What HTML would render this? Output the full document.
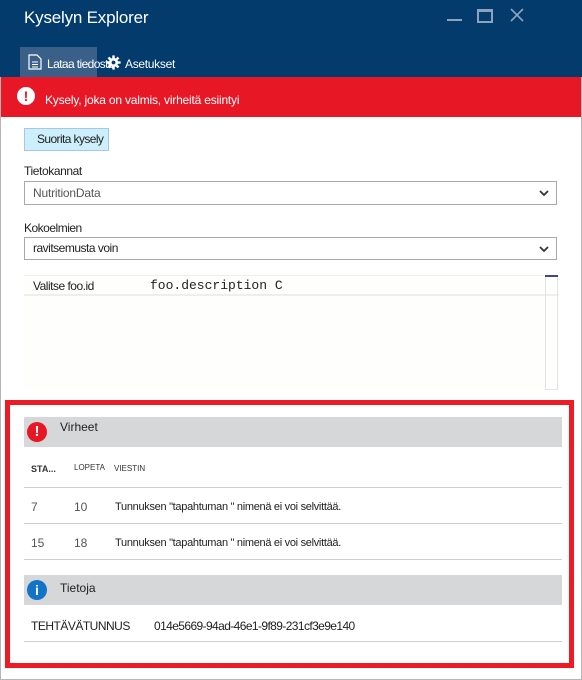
<!DOCTYPE html><html><head><style>
body{margin:0;width:582px;height:680px;position:relative;overflow:hidden;background:#fff;font-family:"Liberation Sans",sans-serif;font-size:12px;color:#222}
.a{position:absolute}
.sel{position:absolute;left:24px;width:533px;border:1px solid #a9a9a9;background:#fff;box-sizing:border-box}
.ln{position:absolute;left:24px;width:538px;height:1px;background:#cfcfcf}
</style></head><body>
<div class="a" style="left:0;top:0;width:582px;height:680px;border:1px solid #b5b5b5;border-top:none;box-sizing:border-box"></div>
<div class="a" style="left:0;top:0;width:582px;height:77px;background:#023b6c"></div>
<div class="a" style="left:24px;top:8px;color:#fff;font-size:17px;letter-spacing:-0.2px">Kyselyn Explorer</div>
<div class="a" style="left:447px;top:19px;width:15px;height:2px;background:#8ea3bb"></div>
<div class="a" style="left:477px;top:9px;width:12px;height:9px;border:2px solid #8ea3bb;border-top-width:3px"></div>
<svg class="a" style="left:510px;top:8px" width="14" height="14"><path d="M1 1l12 12M13 1L1 13" stroke="#8ea3bb" stroke-width="1.6"/></svg>
<div class="a" style="left:20px;top:47px;width:77px;height:30px;background:#3a6089"></div>
<svg class="a" style="left:28px;top:54px" width="14" height="16"><path d="M1 1h8l4 4v10H1z" fill="none" stroke="#fff" stroke-width="1.2"/><path d="M4 8h6M4 10.5h6M4 13h6" stroke="#fff"/></svg>
<div class="a" style="left:47px;top:57px;color:#fff;font-size:12px;letter-spacing:-0.6px">Lataa tiedosto</div>
<svg class="a" style="left:106px;top:55px" width="15" height="15" viewBox="0 0 18 18"><g fill="#fff"><circle cx="9" cy="9" r="5.5"/><rect x="7.5" y="0.5" width="3" height="17"/><rect x="0.5" y="7.5" width="17" height="3"/><rect x="7.5" y="0.5" width="3" height="17" transform="rotate(45 9 9)"/><rect x="7.5" y="0.5" width="3" height="17" transform="rotate(-45 9 9)"/></g><circle cx="9" cy="9" r="2.3" fill="#023b6c"/></svg>
<div class="a" style="left:125px;top:57px;color:#fff;font-size:12px;letter-spacing:-0.3px">Asetukset</div>
<div class="a" style="left:1px;top:77px;width:580px;height:40px;background:#e81725"></div>
<div class="a" style="left:17px;top:87px;width:18px;height:18px;border-radius:50%;background:#fff;color:#e81725;font-weight:bold;text-align:center;line-height:18px;font-size:14px">!</div>
<div class="a" style="left:45px;top:93px;color:#fff;font-size:12px;letter-spacing:-0.2px">Kysely, joka on valmis, virheitä esiintyi</div>
<div class="a" style="left:24px;top:128px;width:85px;height:23px;background:#cdeffc;border:1px solid #a5c8e6;box-sizing:border-box;line-height:21px;padding-left:12px;font-size:12px;letter-spacing:-0.6px">Suorita kysely</div>
<div class="a" style="left:24px;top:164px;letter-spacing:-0.4px">Tietokannat</div>
<div class="sel" style="top:181px;height:24px;line-height:22px;padding-left:8px;color:#555;letter-spacing:-0.2px">NutritionData</div>
<div class="a" style="left:24px;top:221px;letter-spacing:-0.5px">Kokoelmien</div>
<div class="sel" style="top:237px;height:23px;line-height:21px;padding-left:8px;letter-spacing:-0.5px">ravitsemusta voin</div>
<svg class="a" style="left:539px;top:189px" width="10" height="8"><path d="M1 2l4 4 4-4" fill="none" stroke="#333" stroke-width="1.8"/></svg>
<svg class="a" style="left:539px;top:245px" width="10" height="8"><path d="M1 2l4 4 4-4" fill="none" stroke="#333" stroke-width="1.8"/></svg>
<div class="a" style="left:24px;top:275px;width:535px;height:115px;background:#fefefd"></div>
<div class="a" style="left:24px;top:275px;width:535px;height:18px;border-top:1px solid #eee;border-bottom:2px solid #eee"></div>
<div class="a" style="left:33px;top:279px;letter-spacing:-0.5px">Valitse foo.id</div>
<div class="a" style="left:150px;top:278px;font-family:'Liberation Mono',monospace;font-size:13px">foo.description C</div>
<div class="a" style="left:545px;top:275px;width:13px;height:115px;border:1px solid #e3e3e3;box-sizing:border-box"></div>
<div class="a" style="left:545px;top:275px;width:13px;height:2px;background:#3c4a7a"></div>
<div class="a" style="left:5px;top:400px;width:569px;height:268px;border:5px solid #ed1c24;box-sizing:border-box"></div>
<div class="a" style="left:24px;top:417px;width:538px;height:30px;background:#d6d7d9"></div>
<div class="a" style="left:27px;top:422px;width:20px;height:20px;border-radius:50%;background:#e81725;color:#fff;font-weight:bold;text-align:center;line-height:20px;font-size:15px">!</div>
<div class="a" style="left:60px;top:420px;font-size:12px">Virheet</div>
<div class="a" style="left:31px;top:464px;font-size:9px;font-weight:bold;color:#333">STA...</div>
<div class="a" style="left:74px;top:463px;font-size:8px;color:#333">LOPETA</div>
<div class="a" style="left:114px;top:464px;font-size:8px;color:#333">VIESTIN</div>
<div class="ln" style="top:487px"></div>
<div class="a" style="left:31px;top:500px;color:#555">7</div><div class="a" style="left:74px;top:500px;color:#555">10</div>
<div class="a" style="left:115px;top:501px;font-size:11px;letter-spacing:-0.3px">Tunnuksen "tapahtuman " nimenä ei voi selvittää.</div>
<div class="ln" style="top:523px"></div>
<div class="a" style="left:31px;top:536px;color:#555">15</div><div class="a" style="left:74px;top:536px;color:#555">18</div>
<div class="a" style="left:115px;top:537px;font-size:11px;letter-spacing:-0.3px">Tunnuksen "tapahtuman " nimenä ei voi selvittää.</div>
<div class="ln" style="top:559px"></div>
<div class="a" style="left:24px;top:575px;width:538px;height:30px;background:#d6d7d9"></div>
<div class="a" style="left:27px;top:580px;width:20px;height:20px;border-radius:50%;background:#1273c7;color:#fff;font-weight:bold;text-align:center;line-height:20px;font-size:14px">i</div>
<div class="a" style="left:60px;top:581px;font-size:12px">Tietoja</div>
<div class="a" style="left:31px;top:619px;font-size:12px;letter-spacing:-0.5px">TEHTÄVÄTUNNUS</div>
<div class="a" style="left:154px;top:619px;font-size:12px;letter-spacing:-0.6px">014e5669-94ad-46e1-9f89-231cf3e9e140</div>
<div class="ln" style="top:641px"></div>
</body></html>
